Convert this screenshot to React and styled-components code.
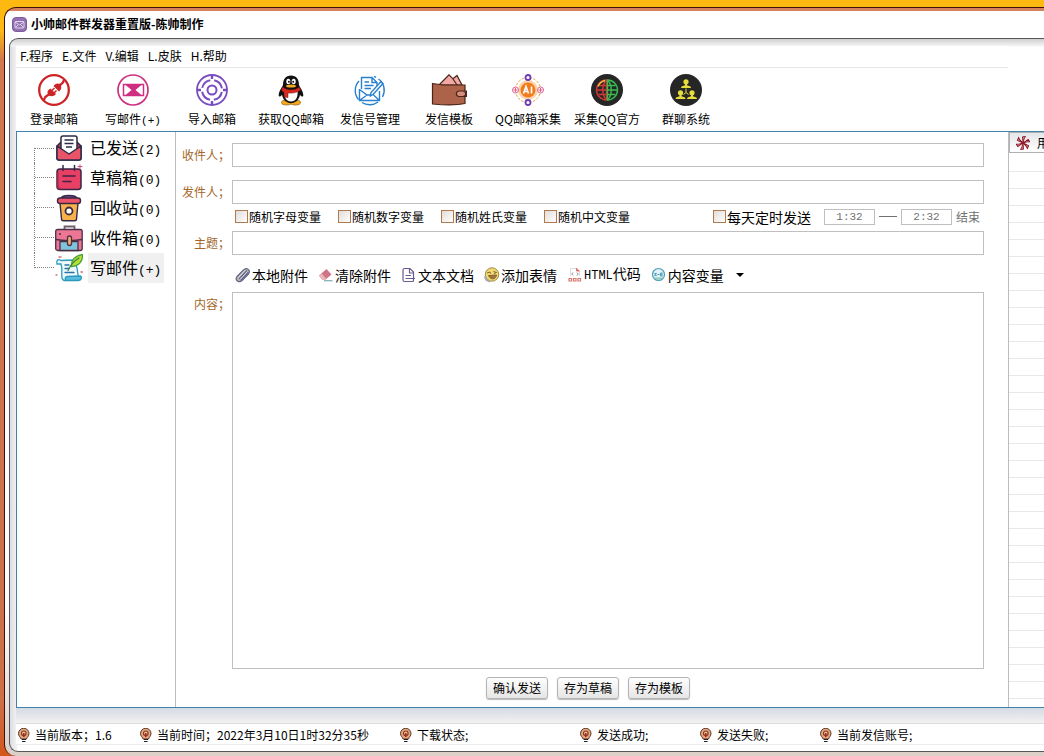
import React, { useState } from "react";
import styled, { createGlobalStyle } from "styled-components";

const GlobalStyle = createGlobalStyle`
  * {
    box-sizing: border-box;
  }
  html, body, #root {
    height: 100%;
  }
  body {
    margin: 0;
    font-family: "Noto Sans CJK SC", sans-serif;
    font-size: 12px;
    line-height: 16px;
    color: #000;
    background: #c8683f;
    overflow: hidden;
  }
  button, input, textarea {
    font-family: inherit;
    font-size: inherit;
    line-height: inherit;
    color: inherit;
    margin: 0;
  }
`;

const Desktop = styled.div`
  height: 100vh;
  padding: 7px 0 0 4px;
  background: linear-gradient(#fdb90f 0 30px, #d2774f 60px, #cb7048 700px, #d4561c);
`;

const Window = styled.div`
  display: flex;
  flex-direction: column;
  height: 100%;
  padding: 0 0 4px 4px;
  border-top: 1px solid #40100c;
  border-left: 1px solid #40100c;
  border-radius: 12px 0 0 12px;
  background: linear-gradient(#d5815c 0 3px, #fff 3px, #fff 80%, #dccfc8);
`;

const TitleBar = styled.header`
  display: flex;
  align-items: center;
  gap: 4px;
  height: 30px;
  padding: 2px 0 0 3px;
`;

const Title = styled.h1`
  margin: 0;
  font-size: 12px;
  line-height: 16px;
  font-weight: 700;
`;

const Frame = styled.div`
  flex: 1;
  min-height: 0;
  display: flex;
  flex-direction: column;
  padding: 7px 0 6px 6px;
  border: 1px solid #55555a;
  border-right: 0;
  border-radius: 9px 0 0 9px;
  background: linear-gradient(#cfcfcf, #f4f4f4 7px, transparent 8px),
    linear-gradient(90deg, #dcdce0, #f4f4f6 7px, #fff 8px);
`;

const MenuBar = styled.nav`
  display: flex;
  gap: 9px;
  height: 22px;
  margin-right: 36px;
  padding-left: 4px;
  background: #fff;
  border-bottom: 1px solid #e6e6e6;
`;

const MenuButton = styled.button`
  padding: 0 0 2px;
  border: 0;
  background: none;
`;

const Toolbar = styled.div`
  display: flex;
  height: 63px;
  background: #fff;
`;

const Tool = styled.button`
  display: flex;
  flex-direction: column;
  align-items: center;
  gap: 5px;
  width: 79px;
  padding: 6px 3px 0 0;
  border: 0;
  background: none;
  white-space: nowrap;

  svg {
    flex: none;
  }
`;

const Main = styled.main`
  flex: 1;
  min-height: 0;
  display: grid;
  grid-template-columns: 159px 1fr 36px;
  border: 1px solid #3f83ad;
  border-right: 0;
  background: #fff;
`;

const Sidebar = styled.aside`
  border-right: 1px solid #b9bcc0;
`;

const Tree = styled.ul`
  margin: 0;
  padding: 1px 0 0 17px;
  list-style: none;
`;

const Branch = styled.li`
  display: flex;
  align-items: center;
  height: 30px;
`;

const Twig = styled.span`
  align-self: ${({ $first }) => ($first ? "flex-end" : "flex-start")};
  width: 21px;
  height: ${({ $first, $last }) => ($first || $last ? "15px" : "30px")};
  border-left: 1px dotted #808080;
  background: repeating-linear-gradient(90deg, #808080 0 1px, transparent 1px 2px)
    0 ${({ $first }) => ($first ? "0" : "14px")} / 100% 1px no-repeat;
`;

const Folder = styled.button`
  display: flex;
  align-items: center;
  gap: 5px;
  height: 30px;
  padding: 0;
  border: 0;
  background: none;
  font-size: 16px;
  line-height: 28px;
`;

const FolderName = styled.span`
  width: 76px;
  height: 30px;
  padding-left: 2px;
  text-align: left;
  white-space: nowrap;
  background: ${({ $active }) => ($active ? "#f0f0f0" : "transparent")};
`;

const Mono = styled.span`
  font-family: "Liberation Mono", monospace;
  font-size: ${({ $size }) => $size}px;
`;

const Form = styled.form`
  display: grid;
  grid-template-columns: 56px 1fr;
  grid-template-rows: 24px 13px 24px 27px 24px 37px 1fr 38px;
  min-width: 0;
  padding: 11px 24px 0 0;
`;

const Label = styled.label`
  padding: 4px 2px 0 0;
  text-align: right;
  white-space: nowrap;
  color: #a4672a;
`;

const Field = styled.input`
  grid-column: 2;
  width: 100%;
  padding: 0 4px;
  border: 1px solid #bfbfbf;
  background: #fff;
  outline: none;
`;

const Content = styled.textarea`
  grid-column: 2;
  width: 100%;
  height: 100%;
  padding: 4px;
  border: 1px solid #bfbfbf;
  resize: none;
  outline: none;
`;

const Gap = styled.div`
  grid-column: 1 / -1;
`;

const Options = styled.div`
  grid-column: 2;
  display: flex;
  align-items: center;
  gap: 17px;
  padding: 0 0 2px 3px;
  white-space: nowrap;
`;

const Check = styled.label`
  display: flex;
  align-items: center;
  gap: 1px;
  font-size: ${({ $large }) => ($large ? 14 : 12)}px;
`;

const Box = styled.input`
  appearance: none;
  width: 13px;
  height: 13px;
  border: 1px solid #b07a50;
  background: linear-gradient(135deg, #e2dcd8, #fff);

  &:checked {
    background: #b07a50;
  }
`;

const Schedule = styled.div`
  display: flex;
  align-items: center;
  gap: 4px;
  margin-left: auto;
  padding-right: 4px;
  color: #707070;

  ${Check} {
    margin-right: 9px;
    color: #000;
  }
`;

const Time = styled.input`
  width: 51px;
  height: 16px;
  padding: 0;
  border: 1px solid #bfbfbf;
  background: #fff;
  text-align: center;
  font-family: "Liberation Mono", monospace;
  font-size: 11px;
  color: #707070;
`;

const Dash = styled.span`
  width: 18px;
  height: 1px;
  background: #707070;
`;

const Inserts = styled.div`
  grid-column: 2;
  display: flex;
  align-items: center;
  gap: 10px;
  padding: 2px 0 0 3px;
`;

const Insert = styled.button`
  display: flex;
  align-items: center;
  gap: 1px;
  padding: 0;
  border: 0;
  background: none;
  font-size: 14px;
  line-height: 20px;
  white-space: nowrap;
`;

const Caret = styled.span`
  margin-left: 11px;
  border: 4px solid transparent;
  border-top-color: #000;
  border-bottom: 0;
`;

const Actions = styled.div`
  grid-column: 2;
  display: flex;
  justify-content: center;
  gap: 9px;
  padding: 8px 40px 7px 0;
`;

const Action = styled.button`
  width: 62px;
  height: 22px;
  padding: 0;
  border: 1px solid #b4b4b4;
  border-radius: 3px;
  background: linear-gradient(#fdfdfd, #e6e6e6);
  box-shadow: 0 1px 1px #bbb;
  white-space: nowrap;
`;

const Log = styled.section`
  display: flex;
  flex-direction: column;
  gap: 2px;
  min-width: 0;
  overflow: hidden;
  border-left: 1px solid #b9bcc0;
`;

const LogHead = styled.div`
  display: flex;
  align-items: center;
  gap: 7px;
  height: 21px;
  padding-left: 6px;
  border: 1px solid #b0b0b0;
  border-right: 0;
  background: linear-gradient(#e4e6ea, #fff);
  white-space: nowrap;
  overflow: hidden;

  svg {
    flex: none;
  }
`;

const LogRows = styled.div`
  flex: 1;
  background: repeating-linear-gradient(#fff 0 16px, #e8e8e8 16px 17px);
`;

const StatusShade = styled.div`
  height: 16px;
  background: linear-gradient(#d5dae4, #f3f1f1);
  border-bottom: 1px solid #dcdcdc;
`;

const StatusBar = styled.footer`
  display: grid;
  grid-template-columns: 122px 260px 180px 120px 120px 1fr;
  align-items: center;
  height: 21px;
  padding-left: 1px;
  background: #fff;
  border-bottom: 1px solid #ececec;
`;

const Status = styled.span`
  display: flex;
  align-items: center;
  gap: 4px;
  padding-top: 2px;
  white-space: nowrap;
`;

/* title, status and log glyphs */

const AppIcon = () => (
  <svg width="15" height="15" viewBox="0 0 15 15">
    <rect x="0.5" y="0.5" width="14" height="14" rx="3.5" fill="#9270b2" stroke="#7d5c9c" />
    <rect x="3" y="4.5" width="9" height="6.5" rx="1" fill="none" stroke="#e5d8f0" />
    <path d="M3 5l4.5 3L12 5M3.500 10.500l2.500-2.500M11.500 10.500L9 8" fill="none" stroke="#e5d8f0" />
  </svg>
);

const BulbIcon = () => (
  <svg width="14" height="14" viewBox="0 0 14 14">
    <path d="M4 11C3.500 9 1.500 8.200 1.500 5.500a5 5 0 0 1 10.500 0c0 2.700-2 3.500-2.500 5.500z" fill="#e2a57e" stroke="#5a3524" />
    <circle cx="6.800" cy="5.300" r="2.300" fill="#f1c6a0" stroke="#823b25" strokeWidth="1.200" />
    <path d="M6.800 5v4" stroke="#a32b1c" strokeWidth="1.600" />
    <path d="M5 11.500h4M5 13.500h3.500" stroke="#222" strokeWidth="1.200" />
  </svg>
);

const PinwheelIcon = () => (
  <svg width="14" height="14" viewBox="0 0 14 14" fill="#d98a90" stroke="#8a1524" strokeWidth="0.9">
    {[0, 60, 120, 180, 240, 300].map((a) => (
      <path key={a} d="M7 7L6.500 .8 9.500 .5 8 3z" transform={`rotate(${a} 7 7)`} />
    ))}
  </svg>
);

/* main toolbar */

const LoginIcon = () => (
  <svg width="32" height="32" viewBox="0 0 32 32" fill="none" stroke="#cc2426">
    <circle cx="16" cy="16" r="14.800" strokeWidth="2.300" />
    <path d="M6 26c1-5 3-3.500 5.500-6M26 6c-1 5-3 3.500-5.500 6" strokeWidth="2.300" />
    <path d="M12.500 14.500l5.500 5.500c-2 2.500-5.500 3-7.500 1s-1-5 2-6.500z" fill="#cc2426" stroke="none" />
    <path d="M15.500 12l5.500 5.500c2.500-2 3-5 1-7s-5-1-6.500 1.500z" fill="#cc2426" stroke="none" />
    <path d="M14 16.500l2.500-2.500M16 19l2.500-2.500" strokeWidth="1.500" />
  </svg>
);

const WriteIcon = () => (
  <svg width="32" height="32" viewBox="0 0 32 32" fill="none" stroke="#cf2f80">
    <circle cx="16" cy="16" r="15" strokeWidth="1.700" />
    <rect x="6.500" y="10.500" width="20" height="11" strokeWidth="1.500" />
    <path d="M8 10.500h17L18.500 16 25 21.500H8l6.500-5.500z" fill="#cf2f80" stroke="none" />
  </svg>
);

const ImportIcon = () => (
  <svg width="32" height="32" viewBox="0 0 32 32" fill="none" stroke="#7a4cc2" strokeWidth="2">
    <circle cx="16" cy="16" r="15" strokeWidth="1.800" />
    <circle cx="16" cy="16" r="10" strokeDasharray="11.700 4" strokeDashoffset="-2" />
    <circle cx="16" cy="16" r="4.500" />
    <path d="M16 1v4M16 27v4M1 16h4M27 16h4" strokeWidth="2.400" />
  </svg>
);

const PenguinIcon = () => (
  <svg width="32" height="32" viewBox="0 0 32 32">
    <ellipse cx="11.500" cy="28.500" rx="5" ry="2.500" fill="#f6a81c" stroke="#714408" strokeWidth=".6" />
    <ellipse cx="20.500" cy="28.500" rx="5" ry="2.500" fill="#f6a81c" stroke="#714408" strokeWidth=".6" />
    <path d="M16 1.500c-5.500 0-8 4-8 9.500-1.500 3-4.500 7-4.300 10.500.3 2 2.300 1 3.300-.8C8 26 11.500 29 16 29s8-3 9-8.300c1 1.800 3 2.800 3.300.8C28.500 18 25.500 14 24 11c0-5.500-2.500-9.500-8-9.500z" fill="#111" />
    <path d="M9.500 16c-.8 6 1 11.500 6.500 11.500S23.300 22 22.500 16z" fill="#fff" />
    <ellipse cx="13.300" cy="7.500" rx="2" ry="2.800" fill="#fff" />
    <ellipse cx="18.700" cy="7.500" rx="2" ry="2.800" fill="#fff" />
    <circle cx="13.900" cy="7.800" r="1" fill="#111" />
    <circle cx="18.200" cy="7.800" r="1" fill="#111" />
    <ellipse cx="16" cy="12" rx="5" ry="1.600" fill="#f5a91d" />
    <path d="M7.500 13c5 3.800 12 3.800 17 0l1 3.300c-3.300 2-6 2.700-9 2.800H13v4.400l-3.800-.5.300-4.700C8 17.800 7 17 6.500 16.200z" fill="#d8291e" stroke="#7b100d" strokeWidth=".5" />
  </svg>
);

const SenderIcon = () => (
  <svg width="32" height="32" viewBox="0 0 32 32" fill="none" stroke="#2a80cf" strokeWidth="1.400">
    <path d="M5 7a14 14 0 0 0-.5 18.500M8 28.500a14 14 0 0 0 16-.5M24.500 5a14 14 0 0 1 4 18M20 2.300l2 1" />
    <path d="M7.500 15V3.500H18l5 5V12M18 3.500v5h5" />
    <path d="M10.500 8H15M10.500 11.500h9M10.500 14.500h6.500" />
    <path d="M5.500 15v11.500h20V17M5.500 15.500l7.500 5.500h4M5.500 26.500l7.500-5.500M25.500 26.500l-6-5.500M19 20.500L29 9.500l-2-2L17 18.500l-.5 3.500z" />
  </svg>
);

const WalletIcon = () => (
  <svg width="36" height="32" viewBox="0 0 36 32" stroke="#4c241b" strokeWidth="1.200">
    <path d="M8 11L18 .8l4 4 4-3.300 5 9.500z" fill="#f0a9a4" />
    <path d="M22 5l4 6" fill="none" />
    <path d="M1.500 9.500L12 11h22v18.500c-9 2-22 1.500-32.500.5z" fill="#ad624a" />
    <path d="M35.500 17H28c-3.500.5-3.500 5 0 5.500h7.500z" fill="#d58e7b" />
    <path d="M32.500 17.500c3 0 3 4.500 0 4.500" fill="none" />
  </svg>
);

const AiIcon = () => (
  <svg width="32" height="32" viewBox="0 0 32 32" fill="none">
    <circle cx="16" cy="16" r="12.500" stroke="#e59a4b" strokeDasharray="2.500 1.500" />
    <circle cx="16" cy="16" r="10" fill="#fbd5a7" />
    <circle cx="16" cy="16" r="7.500" fill="#f07c1f" />
    <path d="M11.500 19.500l2.500-7 2.500 7M12.500 17.500h3M19.500 12.500v7" stroke="#fff" strokeWidth="1.600" />
    <circle cx="16" cy="3.500" r="2.500" fill="#fff" stroke="#6a3cb5" strokeWidth="1.800" />
    <circle cx="16" cy="28.500" r="2.500" fill="#fff" stroke="#6a3cb5" strokeWidth="1.800" />
    <g stroke="#e2608c">
      <circle cx="3.500" cy="16" r="3" fill="#fff" />
      <circle cx="28.500" cy="16" r="3" fill="#fff" />
      <path d="M3.500 14v4M1.500 16h4M28.500 14v4M26.500 16h4" />
    </g>
  </svg>
);

const GlobeIcon = () => (
  <svg width="32" height="32" viewBox="0 0 32 32" fill="none" strokeWidth="1.400">
    <circle cx="16" cy="16" r="16" fill="#262626" />
    <g stroke="#d23935">
      <path d="M15.500 6a10 10 0 0 0 0 20z" />
      <path d="M15.500 6c-5 5-5 15 0 20M6 16h9.500M7.500 11.500h8M7.500 20.500h8" />
    </g>
    <path d="M14 6.500a10 10 0 0 0-7 6" stroke="#e6c33f" />
    <g stroke="#36bf51">
      <path d="M16.500 6a10 10 0 0 1 0 20z" />
      <path d="M16.500 6c5 5 5 15 0 20M16.500 16H26M16.500 11.500h8M16.500 20.500h8" />
    </g>
  </svg>
);

const GroupIcon = () => (
  <svg width="32" height="32" viewBox="0 0 32 32">
    <circle cx="16" cy="16" r="16" fill="#262626" />
    <g fill="#e8dc3d">
      {[[16, 5], [10.500, 16], [22, 16]].map(([x, y]) => (
        <g key={x} transform={`translate(${x} ${y})`}>
          <circle cy="2.800" r="2.600" />
          <path d="M-1 4h2v2.300l3.500 1.200.5 1.500H-5l.5-1.500L-1 6.300z" />
        </g>
      ))}
    </g>
    <path d="M16 14.500v4l-2.500 2M16 18.500l2.500 2" fill="none" stroke="#e8dc3d" />
  </svg>
);

/* folder tree */

const SentIcon = () => (
  <svg width="28" height="28" viewBox="0 0 28 28" stroke="#2c2b49" strokeWidth="1.500" strokeLinejoin="round">
    <path d="M2 12L6 8h16l4 4v12c0 1.500-1 2-2 2H4c-1 0-2-.5-2-2z" fill="#c73a53" />
    <path d="M6 17V4c0-1.500 1-2 2-2h12c1 0 2 .5 2 2v13l-8 4z" fill="#fff" />
    <path d="M9.500 6h9M9.500 9.500h9M11 13h6" fill="none" />
    <path d="M2 12l12 8 12-8v12c0 1.500-1 2-2 2H4c-1 0-2-.5-2-2z" fill="#ea5468" />
  </svg>
);

const DraftIcon = () => (
  <svg width="28" height="28" viewBox="0 0 28 28" fill="none" stroke="#3a2547" strokeWidth="1.500" strokeLinecap="round">
    <rect x="2" y="5" width="24" height="20.500" rx="3" fill="#e83f65" />
    <path d="M2.800 9v13c0 2 1 2.800 2.500 2.800" stroke="#a9284e" />
    <path d="M8 1.500v5M19.500 1.500v5M8 12h12M8 17.500h8" />
    <path d="M23 2.500h4M25 .8v3.500" stroke="#d44a73" strokeWidth="1" />
  </svg>
);

const BinIcon = () => (
  <svg width="28" height="28" viewBox="0 0 28 28" stroke="#382a42" strokeWidth="1.400" strokeLinejoin="round">
    <path d="M5 9h18l-1.500 16c0 1.500-1 1.800-2 1.800h-11c-1 0-2-.3-2-1.800z" fill="#f8b14b" />
    <path d="M6 5c0-3 4-3.500 8-3.500s8 .5 8 3.500z" fill="#6e4aa4" />
    <rect x="2.500" y="4" width="23" height="5.500" rx="2.500" fill="#ed536b" />
    <circle cx="14" cy="17" r="3.500" fill="#fff" strokeWidth="1.800" />
  </svg>
);

const InboxIcon = () => (
  <svg width="28" height="28" viewBox="0 0 28 28" stroke="#4c3046" strokeWidth="1.300">
    <path d="M9.500 6V2.500h10V6" fill="none" stroke="#70616c" strokeWidth="1.800" />
    <rect x=".7" y="5.500" width="26.500" height="21" rx="2" fill="#ed7695" />
    <path d="M5 17.500h18v9H5z" fill="#80c3dc" />
    <path d="M1 15.500c7 1.500 19 1.500 26 0" fill="none" />
    <rect x="12.500" y="12" width="4" height="9.500" rx="2" fill="#f0ad72" />
    <circle cx="5" cy="10" r="1" fill="#4c3046" stroke="none" />
  </svg>
);

const QuillIcon = () => (
  <svg width="28" height="28" viewBox="0 0 28 28" fill="none" stroke="#2b9bbb" strokeWidth="1.300" strokeLinecap="round">
    <path d="M6 6.500c-3-2-5 0-4 3.500h4c2 6 0 9 1 14 .5 2 2 3 4 2.500L24 25c-2-6-1-10-3-14l-2-5z" fill="#eff9fc" />
    <path d="M12 22.500l13.500-.5c2 1 1 4-2 4.500H12c-2.500 0-2.500-3.500 0-4z" fill="#58bde0" />
    <path d="M10 11h4M10 14.500h4M10 18.500h9" stroke="#2974a5" />
    <path d="M16.500 12.500c-.5-6 3-10.500 11-12 .5 6-3 11.500-11 12z" fill="#b4e335" stroke="#4da038" />
    <path d="M13 16.500C15.500 11 19 7 24 4" stroke="#328343" />
    <path d="M4 3h2M1 21h1M26 18h1.500" stroke="#d66b7d" />
  </svg>
);

/* insert bar */

const ClipIcon = () => (
  <svg width="16" height="16" viewBox="0 0 16 16" fill="none" strokeLinecap="round">
    <path d="M2 9.500L8.500 3c3-3 8 0 5 4L7 13.500c-3 3-7.500-.5-5-4z" fill="#b5b8a0" stroke="#62628b" strokeWidth="1.200" />
    <path d="M4.500 11.500l7-7.500M6 13l7-7.500" stroke="#62628b" strokeWidth="1.200" />
    <path d="M3.500 10.500L10 3.500M5.500 12L12 5" stroke="#dfe2f0" strokeWidth=".9" />
  </svg>
);

const EraserIcon = () => (
  <svg width="16" height="16" viewBox="0 0 16 16">
    <path d="M1 8.500L8.500 2l5 5.500L7 13H4.500z" fill="#cf7485" />
    <path d="M1 8.500L3.500 6.300 8.500 12 7 13H4.500z" fill="#ebb3b9" />
    <path d="M6 13.700h8.500" stroke="#8db6bd" strokeWidth="1.400" />
  </svg>
);

const TextIcon = () => (
  <svg width="16" height="16" viewBox="0 0 16 16" fill="none" stroke="#695a91" strokeWidth="1.200">
    <path d="M12.500 13.500c0 .8-.5 1-1 1h-8c-1 0-1.500-.5-1.500-1.500V3c0-1 .5-1.500 1.500-1.500H9L12.500 5z" />
    <path d="M8.500 1.500V6h4M4.500 8.500H10M4.500 11.500h9.500" />
  </svg>
);

const SmileIcon = () => (
  <svg width="16" height="16" viewBox="0 0 16 16" fill="none" stroke="#806631">
    <circle cx="8" cy="7.500" r="6.700" fill="#f0d872" stroke="#a28a45" />
    <path d="M3 6l3-1 .5 1.500M9.500 4.500l3 1-2.500 1" />
    <path d="M4.500 8.500l8-.5c-.5 4.500-6 5.500-8 .5z" fill="#a5713f" />
    <path d="M1 9c-.5 3 2 5 5 5.800" stroke="#a0a8b8" strokeWidth="1.400" />
  </svg>
);

const HtmlIcon = () => (
  <svg width="16" height="16" viewBox="0 0 16 16" fill="none" stroke="#d9786e">
    <path d="M3.500 9V1.500h6L12.500 4v5" stroke="#e4dada" />
    <path d="M9.500 1v3h3" fill="#e0616c" />
    <path d="M6 5.500L4.800 7 6 8.500M10 5.500L11.200 7 10 8.500" stroke="#908888" />
    <path d="M2 11.500h2.500V14H2zM6.500 11.500H9V14H6.500zM11 11.500h2.500V14H11z" strokeWidth="1.200" />
  </svg>
);

const VariableIcon = () => (
  <svg width="16" height="16" viewBox="0 0 16 16" fill="none" stroke="#4e9db8">
    <circle cx="7.500" cy="7.500" r="6" fill="#e2f2f6" strokeWidth="1.200" />
    <path d="M3 10.500c2 3 7 3 9 0z" fill="#8cc9bb" stroke="none" />
    <path d="M3.500 6l2 3M5.500 6l-2 3M6.500 7.500h2M9.500 6v3M9.500 6h1.500v3H9.500" strokeWidth="1.100" />
  </svg>
);

const menus = ["F.程序", "E.文件", "V.编辑", "L.皮肤", "H.帮助"];

const tools = [
  { text: "登录邮箱", icon: <LoginIcon /> },
  { text: "写邮件", mono: "(+)", icon: <WriteIcon /> },
  { text: "导入邮箱", icon: <ImportIcon /> },
  { text: "获取QQ邮箱", icon: <PenguinIcon /> },
  { text: "发信号管理", icon: <SenderIcon /> },
  { text: "发信模板", icon: <WalletIcon /> },
  { text: "QQ邮箱采集", icon: <AiIcon /> },
  { text: "采集QQ官方", icon: <GlobeIcon /> },
  { text: "群聊系统", icon: <GroupIcon /> },
];

const folders = [
  { text: "已发送", count: "(2)", icon: <SentIcon /> },
  { text: "草稿箱", count: "(0)", icon: <DraftIcon /> },
  { text: "回收站", count: "(0)", icon: <BinIcon /> },
  { text: "收件箱", count: "(0)", icon: <InboxIcon /> },
  { text: "写邮件", count: "(+)", icon: <QuillIcon /> },
];

const variables = ["随机字母变量", "随机数字变量", "随机姓氏变量", "随机中文变量"];

const inserts = [
  { text: "本地附件", icon: <ClipIcon /> },
  { text: "清除附件", icon: <EraserIcon /> },
  { text: "文本文档", icon: <TextIcon /> },
  { text: "添加表情", icon: <SmileIcon /> },
  { text: "代码", mono: "HTML", icon: <HtmlIcon /> },
  { text: "内容变量", icon: <VariableIcon />, menu: true },
];

const statuses = [
  "当前版本；1.6",
  "当前时间；2022年3月10日1时32分35秒",
  "下载状态;",
  "发送成功;",
  "发送失败;",
  "当前发信账号;",
];

const App = () => {
  const [active, setActive] = useState(4);

  return (
    <>
      <GlobalStyle />
      <Desktop>
        <Window>
          <TitleBar>
            <AppIcon />
            <Title>小帅邮件群发器重置版-陈帅制作</Title>
          </TitleBar>
          <Frame>
            <MenuBar>
              {menus.map((menu) => (
                <MenuButton key={menu}>{menu}</MenuButton>
              ))}
            </MenuBar>
            <Toolbar>
              {tools.map(({ text, mono, icon }) => (
                <Tool key={text}>
                  {icon}
                  <span>
                    {text}
                    {mono && <Mono $size={11}>{mono}</Mono>}
                  </span>
                </Tool>
              ))}
            </Toolbar>
            <Main>
              <Sidebar>
                <Tree>
                  {folders.map(({ text, count, icon }, i) => (
                    <Branch key={text}>
                      <Twig $first={i === 0} $last={i === folders.length - 1} />
                      <Folder onClick={() => setActive(i)}>
                        {icon}
                        <FolderName $active={i === active}>
                          {text}
                          <Mono $size={13}>{count}</Mono>
                        </FolderName>
                      </Folder>
                    </Branch>
                  ))}
                </Tree>
              </Sidebar>
              <Form onSubmit={(e) => e.preventDefault()}>
                <Label htmlFor="to">收件人；</Label>
                <Field id="to" />
                <Gap />
                <Label htmlFor="from">发件人；</Label>
                <Field id="from" />
                <Options>
                  {variables.map((name) => (
                    <Check key={name}>
                      <Box type="checkbox" />
                      {name}
                    </Check>
                  ))}
                  <Schedule>
                    <Check $large>
                      <Box type="checkbox" />
                      每天定时发送
                    </Check>
                    <Time aria-label="开始时间" defaultValue="1:32" />
                    <Dash />
                    <Time id="end" defaultValue="2:32" />
                    <label htmlFor="end">结束</label>
                  </Schedule>
                </Options>
                <Label htmlFor="subject">主题；</Label>
                <Field id="subject" />
                <Inserts>
                  {inserts.map(({ text, mono, icon, menu }) => (
                    <Insert key={text} type="button">
                      {icon}
                      <span>
                        {mono && <Mono $size={12}>{mono}</Mono>}
                        {text}
                      </span>
                      {menu && <Caret />}
                    </Insert>
                  ))}
                </Inserts>
                <Label htmlFor="content">内容；</Label>
                <Content id="content" />
                <Actions>
                  <Action type="submit">确认发送</Action>
                  <Action type="button">存为草稿</Action>
                  <Action type="button">存为模板</Action>
                </Actions>
              </Form>
              <Log>
                <LogHead>
                  <PinwheelIcon />
                  <span>用户</span>
                </LogHead>
                <LogRows />
              </Log>
            </Main>
            <StatusShade />
            <StatusBar>
              {statuses.map((text) => (
                <Status key={text}>
                  <BulbIcon />
                  {text}
                </Status>
              ))}
            </StatusBar>
          </Frame>
        </Window>
      </Desktop>
    </>
  );
};

export default App;
